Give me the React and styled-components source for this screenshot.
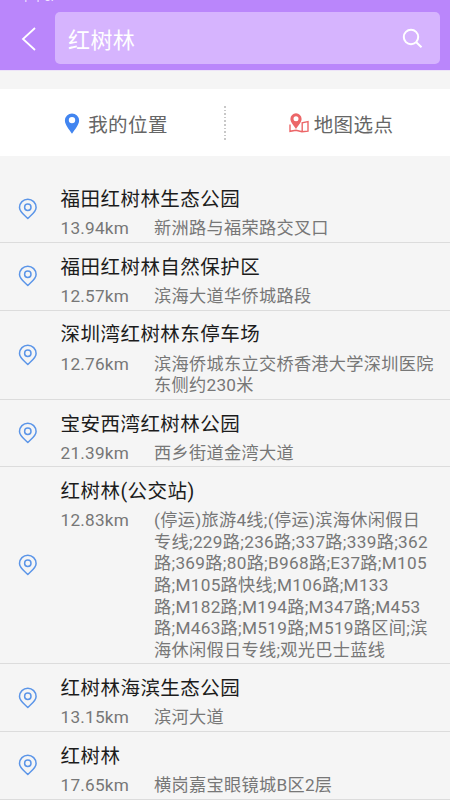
import React from 'react'
import styled, { createGlobalStyle } from 'styled-components'

const GlobalStyle = createGlobalStyle`
  body {
    margin: 0;
    background: #f5f5f5;
    font-family: Roboto, 'Noto Sans CJK SC', sans-serif;
    overflow: hidden;
  }
`;

const Screen = styled.div`
  width: 450px;
  height: 800px;
  overflow: hidden;
  display: flex;
  flex-direction: column;
`;

const StatusBar = styled.div`
  flex: none;
  height: 12px;
  padding-left: 20px;
  background: #ba86fb;
  color: #f3e8ff;
  font-size: 12px;
  line-height: 12px;

  span {
    display: block;
    height: 12px;
    margin-top: -9px;
  }
`;

const Header = styled.header`
  flex: none;
  height: 59px;
  display: flex;
  align-items: flex-start;
  background: #ba86fb;
  border-bottom: 1px solid #ede4f8;
  box-sizing: border-box;
`;

const BackButton = styled.button`
  width: 55px;
  height: 53px;
  padding: 0 0 0 21px;
  border: none;
  background: none;
  display: flex;
  align-items: center;
`;

const SearchBox = styled.div`
  width: 385px;
  height: 52px;
  padding: 0 17px 0 13px;
  box-sizing: border-box;
  display: flex;
  align-items: center;
  justify-content: space-between;
  border-radius: 5px;
  background: #d6b4fe;
  color: #fff;
  font-size: 22px;
  letter-spacing: 0.4px;
`;

const Shortcuts = styled.div`
  flex: none;
  height: 67px;
  margin: 18px 0 19.4px;
  display: flex;
  align-items: center;
  background: #fff;
`;

const Shortcut = styled.div`
  flex: 1;
  display: flex;
  align-items: center;
  justify-content: center;
  gap: ${props => props.$gap}px;
  padding-left: ${props => props.$shift}px;
  padding-top: 1px;
  color: #666;
  font-size: 19.5px;
  letter-spacing: 0.4px;
`;

const Divider = styled.div`
  width: 2px;
  height: 34px;
  margin-left: -1px;
  background: repeating-linear-gradient(#c8c8c8 0 1.5px, transparent 1.5px 3.6px);
`;

const Row = styled.div`
  flex: none;
  display: flex;
  align-items: center;
  border-bottom: 1px solid #dcdcdc;
  padding-bottom: 2px;
`;

const PinCell = styled.div`
  width: 60.6px;
  padding: 2px 0 0 18px;
  box-sizing: border-box;
  display: flex;
`;

const Info = styled.div`
  flex: 1;
  padding-top: 10.9px;
`;

const Title = styled.div`
  font-size: 19.5px;
  line-height: 28px;
  letter-spacing: 0.45px;
  color: #1c1c1c;
`;

const Detail = styled.div`
  display: flex;
  margin-top: 4.1px;
  font-size: 17.2px;
  line-height: 21.6px;
  letter-spacing: 0.25px;
  color: #777;
`;

const Distance = styled.div`
  width: 93.4px;
  letter-spacing: 0.2px;
`;

const Address = styled.div`
  width: 283px;
  letter-spacing: 0.3px;

  span {
    display: block;
    white-space: nowrap;
  }
`;

const BackIcon = () => (
    <svg width="16" height="26" viewBox="0 0 16 26" fill="none" stroke="#fff" strokeWidth="1.8">
        <path d="M14 2 L2 13 L14 24" />
    </svg>
)

const SearchIcon = () => (
    <svg width="21" height="21" viewBox="0 0 21 21" fill="none" stroke="#fff" strokeWidth="2">
        <circle cx="9" cy="9" r="7.2" />
        <path d="M14 14 L19.5 19.2" />
    </svg>
)

const LocationIcon = () => (
    <svg width="16" height="21" viewBox="0 0 16 21">
        <path fill="#4285f0" fillRule="evenodd" d="M8 .5A7.1 7.1 0 0 0 .9 7.5C.9 12 5.4 16.5 8 20.8C10.6 16.5 15.1 12 15.1 7.5A7.1 7.1 0 0 0 8 .5ZM8 3.9A3.2 3.2 0 1 1 8 10.3A3.2 3.2 0 0 1 8 3.9Z" />
    </svg>
)

const MapPickIcon = () => (
    <svg width="20" height="20" viewBox="0 0 20 20">
        <path fill="#ec6668" fillRule="evenodd" d="M7 .3A5.6 5.6 0 0 0 1.4 5.9C1.4 9.5 5 12.5 7 16C9 12.5 12.6 9.5 12.6 5.9A5.6 5.6 0 0 0 7 .3ZM7 3.3A2.5 2.5 0 1 1 7 8.3A2.5 2.5 0 0 1 7 3.3Z" />
        <path fill="none" stroke="#ec6668" strokeWidth="1.4" d="M1 11.5V18.3L7 17.3L13 18.7L19 18.2V8.6L13.2 9.8V18.5" />
    </svg>
)

const PinIcon = () => (
    <svg width="20" height="22" viewBox="0 0 20 22" fill="none" stroke="#5b95e8" strokeWidth="1.5">
        <path d="M9.8 1.2A8.3 8.3 0 0 0 1.5 9.5C1.5 14 6.2 16.8 9.8 20.4C13.4 16.8 18.1 14 18.1 9.5A8.3 8.3 0 0 0 9.8 1.2Z" strokeLinejoin="round" />
        <circle cx="9.8" cy="9.2" r="3.2" />
    </svg>
)

const places = [
    { name: '福田红树林生态公园', distance: '13.94km', address: ['新洲路与福荣路交叉口'] },
    { name: '福田红树林自然保护区', distance: '12.57km', address: ['滨海大道华侨城路段'] },
    { name: '深圳湾红树林东停车场', distance: '12.76km', address: ['滨海侨城东立交桥香港大学深圳医院', '东侧约230米'] },
    { name: '宝安西湾红树林公园', distance: '21.39km', address: ['西乡街道金湾大道'] },
    {
        name: '红树林(公交站)',
        distance: '12.83km',
        address: [
            '(停运)旅游4线;(停运)滨海休闲假日',
            '专线;229路;236路;337路;339路;362',
            '路;369路;80路;B968路;E37路;M105',
            '路;M105路快线;M106路;M133',
            '路;M182路;M194路;M347路;M453',
            '路;M463路;M519路;M519路区间;滨',
            '海休闲假日专线;观光巴士蓝线',
        ],
    },
    { name: '红树林海滨生态公园', distance: '13.15km', address: ['滨河大道'] },
    { name: '红树林', distance: '17.65km', address: ['横岗嘉宝眼镜城B区2层'] },
]

const App = () => {
    return (
        <>
            <GlobalStyle />
            <Screen>
                <StatusBar><span>下午6:</span></StatusBar>
                <Header>
                    <BackButton><BackIcon /></BackButton>
                    <SearchBox>
                        红树林
                        <SearchIcon />
                    </SearchBox>
                </Header>

                <Shortcuts>
                    <Shortcut $gap={8} $shift={7}><LocationIcon />我的位置</Shortcut>
                    <Divider />
                    <Shortcut $gap={5} $shift={6}><MapPickIcon />地图选点</Shortcut>
                </Shortcuts>

                {places.map(place => (
                    <Row key={place.name}>
                        <PinCell><PinIcon /></PinCell>
                        <Info>
                            <Title>{place.name}</Title>
                            <Detail>
                                <Distance>{place.distance}</Distance>
                                <Address>
                                    {place.address.map(line => <span key={line}>{line}</span>)}
                                </Address>
                            </Detail>
                        </Info>
                    </Row>
                ))}
            </Screen>
        </>
    )
}

export default App
